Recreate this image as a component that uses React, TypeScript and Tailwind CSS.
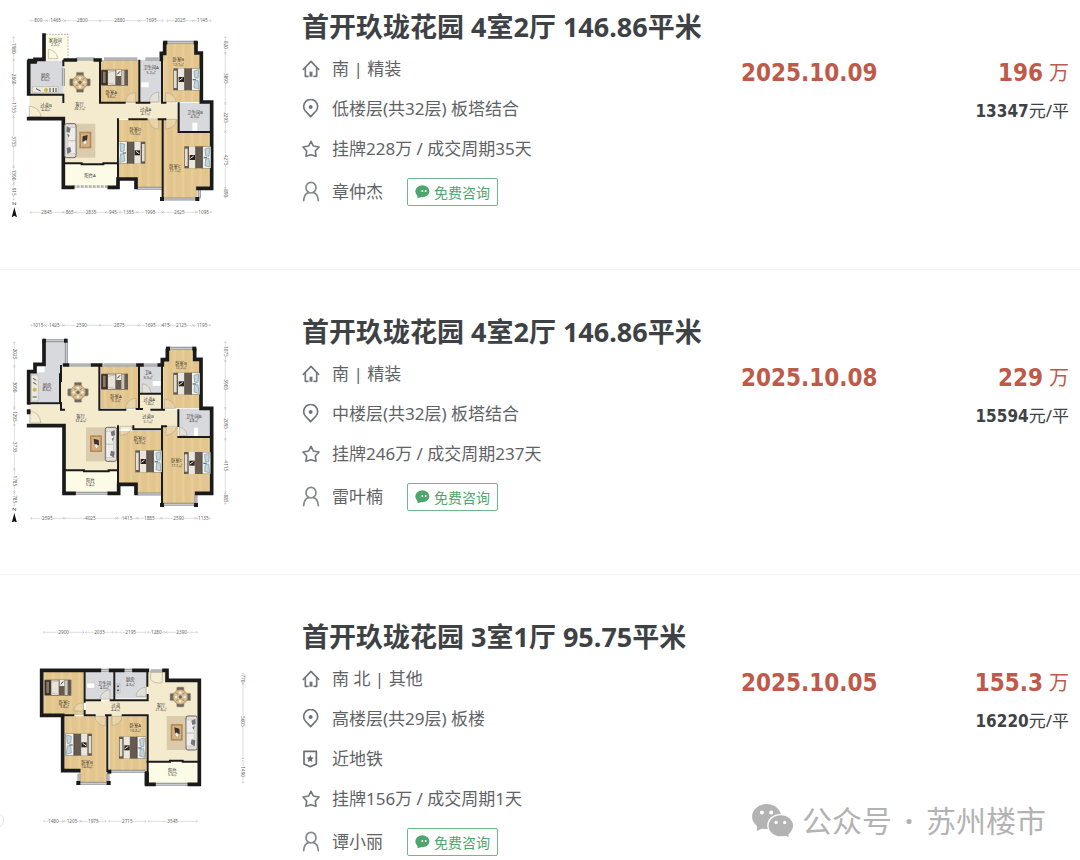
// src/pages/DealListPage.tsx
import type { ReactNode } from 'react';

type Deal = {
  id: string;
  title: string;
  facing: string;
  floor: string;
  subway?: string;
  cycle: string;
  agent: string;
  date: string;
  total: string;
  unit: string;
  plan: ReactNode;
};

const deals: Deal[] = [
  {
    id: 'd1',
    title: '首开玖珑花园 4室2厅 146.86平米',
    facing: '南 | 精装',
    floor: '低楼层(共32层) 板塔结合',
    cycle: '挂牌228万 / 成交周期35天',
    agent: '章仲杰',
    date: '2025.10.09',
    total: '196',
    unit: '13347',
    plan: <PlanWithYard />,
  },
  {
    id: 'd2',
    title: '首开玖珑花园 4室2厅 146.86平米',
    facing: '南 | 精装',
    floor: '中楼层(共32层) 板塔结合',
    cycle: '挂牌246万 / 成交周期237天',
    agent: '雷叶楠',
    date: '2025.10.08',
    total: '229',
    unit: '15594',
    plan: <PlanWithKitchen />,
  },
  {
    id: 'd3',
    title: '首开玖珑花园 3室1厅 95.75平米',
    facing: '南 北 | 其他',
    floor: '高楼层(共29层) 板楼',
    subway: '近地铁',
    cycle: '挂牌156万 / 成交周期1天',
    agent: '谭小丽',
    date: '2025.10.05',
    total: '155.3',
    unit: '16220',
    plan: <PlanSmall />,
  },
];

export default function App() {
  return (
    <main className="relative overflow-hidden bg-white font-['Noto_Sans','Noto_Sans_CJK_SC',sans-serif] text-[#3e4245]">
      {deals.map((deal) => (
        <DealRow key={deal.id} deal={deal} />
      ))}
      <Watermark />
    </main>
  );
}

function DealRow({ deal }: { deal: Deal }) {
  return (
    <article className="grid grid-cols-[302px_1fr_180px_148px] border-b border-[#f4f4f4] pr-[11px] pt-[42px] pb-[59px] first:pt-[7px] last-of-type:border-b-0 last-of-type:pb-0">
      <div className="-mb-10">{deal.plan}</div>
      <div className="whitespace-nowrap">
        <h2 className="text-[27px] leading-10 font-bold">{deal.title}</h2>
        <ul className="mt-0.5 text-[17px] text-[#5f6366]">
          <InfoLine icon={<HouseIcon />}>{deal.facing}</InfoLine>
          <InfoLine icon={<PinIcon />}>{deal.floor}</InfoLine>
          {deal.subway ? <InfoLine icon={<BadgeIcon />}>{deal.subway}</InfoLine> : null}
          <InfoLine icon={<StarIcon />}>{deal.cycle}</InfoLine>
        </ul>
        <div className="mt-[5px] flex h-9 items-center text-[17px] text-[#5f6366]">
          <PersonIcon />
          <span className="ml-3 w-[75px]">{deal.agent}</span>
          <button
            type="button"
            className="flex h-7 items-center gap-1 rounded-xs border border-[#6fb889] px-[7px] text-[14px] text-[#4fa66c]"
          >
            <ChatIcon />
            免费咨询
          </button>
        </div>
      </div>
      <p className="mt-[46px] font-['DejaVu_Sans_Condensed','DejaVu_Sans',sans-serif] text-2xl leading-10 font-bold text-[#be5a49]">
        {deal.date}
      </p>
      <div className="mt-[46px] text-right whitespace-nowrap">
        <p className="flex items-center justify-end gap-1.5 text-[#be5a49]">
          <strong className="font-['DejaVu_Sans_Condensed','DejaVu_Sans',sans-serif] text-2xl leading-10">{deal.total}</strong>
          <span className="text-[20px] leading-10">万</span>
        </p>
        <p className="text-[17px] leading-9">
          <strong className="font-['DejaVu_Sans_Condensed','DejaVu_Sans',sans-serif]">{deal.unit}</strong>元/平
        </p>
      </div>
    </article>
  );
}

function InfoLine({ icon, children }: { icon: ReactNode; children: ReactNode }) {
  return (
    <li className="flex h-10 items-center gap-3">
      {icon}
      <span>{children}</span>
    </li>
  );
}

/* ---------- icons ---------- */

function HouseIcon() {
  return (
    <svg viewBox="0 0 54 54" className="size-[18px] shrink-0" fill="none" stroke="#75787a" strokeWidth="5" strokeLinejoin="round" strokeLinecap="round">
      <path d="M4 28 27 4 50 28" />
      <path d="M10 25V49H18M44 25V49H36" />
      <path d="M27 35V50" strokeWidth="9" strokeLinecap="butt" />
    </svg>
  );
}

function PinIcon() {
  return (
    <svg viewBox="0 0 54 60" className="h-5 w-[18px] shrink-0" fill="none" stroke="#717476" strokeWidth="5" strokeLinejoin="round">
      <path d="M26 53 10 36a21 21 0 1 1 32 0Z" />
      <circle cx="26" cy="24" r="6" fill="#717476" stroke="none" />
    </svg>
  );
}

function StarIcon() {
  return (
    <svg viewBox="0 0 54 54" className="size-[18px] shrink-0" fill="none" stroke="#75787a" strokeWidth="5" strokeLinejoin="round">
      <path d="M27 4 34 18 51 21 40 33 42 49 27 44 12 49 14 33 3 21 20 18Z" />
    </svg>
  );
}

function BadgeIcon() {
  return (
    <svg viewBox="0 0 54 54" className="size-[18px] shrink-0" fill="none" stroke="#6b6e70" strokeWidth="5" strokeLinejoin="round">
      <path d="M6 4H43V42L25 50 6 42Z" />
      <path d="M25 15 28 22 35 23 30 28 31 36 25 32 18 36 19 28 14 23 22 22Z" fill="#6b6e70" stroke="none" />
    </svg>
  );
}

function PersonIcon() {
  return (
    <svg viewBox="0 0 54 66" className="h-[22px] w-[18px] shrink-0" fill="none" stroke="#85888a" strokeWidth="5" strokeLinecap="round">
      <ellipse cx="27" cy="20" rx="15" ry="16" />
      <path d="M5 59C6 45 12 37 20 35M49 59C48 45 42 37 34 35" />
    </svg>
  );
}

function ChatIcon() {
  return (
    <svg viewBox="0 0 45 42" className="h-[14px] w-[15px] shrink-0" fill="#4fa66c">
      <ellipse cx="22" cy="19" rx="21" ry="18" />
      <path d="M6 28 8 40 22 35Z" />
      <circle cx="22" cy="18" r="3" fill="#fff" />
      <circle cx="32" cy="18" r="3" fill="#fff" />
    </svg>
  );
}

function Watermark() {
  return (
    <div className="absolute right-[34px] bottom-4 flex h-12 items-center text-[30px] text-[#b3b3b3]">
      <svg viewBox="0 0 124 100" className="mr-[9px] h-[33px] w-[41px]" fill="#b3b3b3">
        <ellipse cx="44" cy="38" rx="44" ry="38" />
        <path d="M16 60 14 82 36 72Z" />
        <ellipse cx="86" cy="65" rx="40" ry="35" fill="#fff" />
        <ellipse cx="87" cy="66" rx="37" ry="32" />
        <path d="M94 94 111 100 110 82Z" />
        <g fill="#fff">
          <circle cx="30" cy="26" r="6" />
          <circle cx="58" cy="26" r="6" />
          <circle cx="73" cy="56" r="5" />
          <circle cx="99" cy="56" r="5" />
        </g>
      </svg>
      <span>公众号</span>
      <span className="w-[34px] text-center font-bold">·</span>
      <span>苏州楼市</span>
    </div>
  );
}

/* ---------- floor plans, drawn at three units to the pixel ---------- */

const CREAM = '#f4ebcf';
const PALE = '#fcfbe6';
const TILE = '#d8d9dc';
const WALL = '#1a1a1a';

function Plan({ top, label, children }: { top: number; label: string; children: ReactNode }) {
  return (
    <svg viewBox={`0 ${top} 780 630`} role="img" aria-label={label} className="h-[210px] w-[260px]">
      <defs>
        <pattern id="wood" width="26" height="60" patternUnits="userSpaceOnUse">
          <rect width="26" height="60" fill="#e3c68e" />
          <rect width="9" height="60" fill="#e7cc98" />
          <path d="M9 0V60M18 0V60" stroke="#dcbc80" />
        </pattern>
      </defs>
      {children}
    </svg>
  );
}

function Wood({ d }: { d: string }) {
  return <path d={d} fill="url(#wood)" />;
}

function Walls({ d, w = 11 }: { d: string; w?: number }) {
  return <path d={d} fill="none" stroke={WALL} strokeWidth={w} strokeLinecap="square" />;
}

// window strips in the outer walls
function Windows({ d }: { d: string }) {
  return (
    <>
      <path d={d} fill="none" stroke="#8e9295" strokeWidth="9" />
      <path d={d} fill="none" stroke="#d5d8da" strokeWidth="3" />
    </>
  );
}

function Doors({ d }: { d: string }) {
  return <path d={d} fill="#faf3dc" fillOpacity="0.3" stroke="#b3a98f" strokeWidth="2" />;
}

function Bed({ x, y, flip = false }: { x: number; y: number; flip?: boolean }) {
  return (
    <g transform={flip ? `translate(${x + 80} ${y}) scale(-1 1)` : `translate(${x} ${y})`}>
      <rect width="80" height="66" fill="#655a50" />
      <rect x="2" y="7" width="8" height="52" fill="#e3ddd2" />
      <rect x="14" width="20" height="66" fill="#ebe6dd" />
      <rect x="16" y="26" width="16" height="15" fill="#29231f" />
      <path d="M18 36 28 29" stroke="#ece7dd" strokeWidth="3" />
      <rect x="55" y="1" width="24" height="64" fill="#f1f0ec" />
      <path d="M62 8 76 4 74 30 64 28ZM64 38 74 36 77 62 62 58Z" fill="#c5d5dc" stroke="#7a96a3" strokeWidth="2" />
      <path d="M58 34H68" stroke="#5d747d" strokeWidth="4" />
      <path d="M34 0V66M54 0V66" stroke="#453c35" strokeWidth="2" />
    </g>
  );
}

function SmallBed({ x, y }: { x: number; y: number }) {
  return (
    <g transform={`translate(${x} ${y})`}>
      <rect width="80" height="48" fill="#665a4f" />
      <rect y="2" width="18" height="44" fill="#3b312b" />
      <rect x="5" y="6" width="8" height="34" fill="#8a7868" />
      <rect x="20" y="2" width="22" height="44" fill="#e8e3da" />
      <rect x="60" y="2" width="9" height="44" fill="#cdc5b9" />
      <rect x="45" y="1" width="14" height="18" fill="#eeeae3" />
      <path d="M48 14 56 5" stroke="#333" strokeWidth="3" />
      <path d="M20 8 41 4M20 40 41 44" stroke="#b5ab9f" strokeWidth="2" />
    </g>
  );
}

function Sofa({ x, y, flip = false }: { x: number; y: number; flip?: boolean }) {
  return (
    <g transform={flip ? `translate(${x} ${y}) scale(-1 1)` : `translate(${x} ${y})`}>
      <rect x="14" y="0" width="78" height="102" fill="#d9cbac" />
      <rect x="44" y="24" width="36" height="50" fill="#b78b55" />
      <rect x="49" y="29" width="26" height="40" fill="#d4b184" />
      <path d="M54 38 69 34 67 50 53 54Z" fill="#3b322b" />
      <path d="M55 57 62 49 67 56 60 65Z" fill="#f0efe8" stroke="#756a5d" />
      <rect width="34" height="102" rx="6" fill="#e0ddda" stroke="#6a6560" strokeWidth="3" />
      <rect x="10" y="12" width="22" height="38" fill="#efedea" stroke="#aaa5a0" />
      <rect x="10" y="52" width="22" height="38" fill="#efedea" stroke="#aaa5a0" />
      <path d="M6 8 18 14 15 27 5 24ZM6 73 17 70 20 84 8 91ZM7 30 15 34 12 42Z" fill="#73767a" />
    </g>
  );
}

function DiningSet({ x, y }: { x: number; y: number }) {
  return (
    <g transform={`translate(${x} ${y})`}>
      <g fill="#6d665c" stroke="#b5ad9f" strokeWidth="2">
        <rect x="-11" y="-30" width="22" height="14" rx="3" />
        <rect x="-11" y="16" width="22" height="14" rx="3" />
        <rect x="-31" y="-11" width="14" height="22" rx="3" />
        <rect x="17" y="-11" width="14" height="22" rx="3" />
      </g>
      <circle r="22" fill="#dcbd88" stroke="#a98a58" strokeWidth="2" />
      <circle r="5" fill="#7a6c45" />
      <g fill="#ece9df" stroke="#aaa" strokeWidth="1">
        <circle cy="-13" r="5" />
        <circle cy="13" r="5" />
        <circle cx="-13" r="5" />
        <circle cx="13" r="5" />
      </g>
      <path d="M-13-13-7-7M13-13 7-7M-13 13-7 7M13 13 7 7" stroke="#a5834f" strokeWidth="3" />
    </g>
  );
}

function Room({ x, y, name, area }: { x: number; y: number; name: string; area?: string }) {
  return (
    <text x={x} y={y} textAnchor="middle" fontSize="13" fill="#3c3833" className="font-['Noto_Sans','Noto_Sans_CJK_SC',sans-serif]">
      {name}
      {area ? (
        <tspan x={x} dy="13" fontSize="11">
          {area}
        </tspan>
      ) : null}
    </text>
  );
}

type Span = [from: number, to: number, size: string];

// dimension chain: a row of measured spans, or a column when vertical
function Dims({ at, spans, vertical = false }: { at: number; spans: Span[]; vertical?: boolean }) {
  return (
    <g transform={vertical ? `translate(${at} 0) rotate(90)` : `translate(0 ${at})`}>
      {spans.map(([from, to, size]) => {
        const mid = (from + to) / 2;
        const half = size.length * 4;
        return (
          <g key={from}>
            <path
              d={`M${from} 0H${Math.max(from, mid - half)}M${Math.min(to, mid + half)} 0H${to}M${from + 4}-4 ${from} 0 ${from + 4} 4M${to - 4}-4 ${to} 0 ${to - 4} 4`}
              fill="none"
              stroke="#9b9b9b"
            />
            <text x={mid} y="5" textAnchor="middle" fontSize="14" fill="#666" className="font-['Noto_Sans',sans-serif]">
              {size}
            </text>
          </g>
        );
      })}
    </g>
  );
}

function Compass({ y }: { y: number }) {
  return (
    <g transform={`translate(43 ${y})`}>
      <circle r="15" fill="#fff" stroke="#dedede" />
      <path d="M0-15 8 15 0 10-8 15Z" fill="#111" />
      <path d="M-4-22V-30L4-22V-30" fill="none" stroke="#555" strokeWidth="2" />
    </g>
  );
}

function PlanWithYard() {
  return (
    <Plan top={21} label="户型图">
      <path d="M190 180H300V310H535V358H355V490H190V358H88V285H190Z" fill={CREAM} />
      <path d="M134 103H204V180H134ZM190 492H355V562H190Z" fill={PALE} />
      <path d="M88 182H190V282H88ZM420 180H486V308H420ZM537 308H633V395H537Z" fill={TILE} />
      <Wood d="M302 180H417V308H302ZM490 130H586V160H604V306H490ZM356 360H487V562H410V535H356ZM489 358H536V397H633V565H592V597H485V565H489Z" />
      <path d="M138 103H204V178" fill="none" stroke="#8b8b8b" strokeWidth="2" strokeDasharray="5 4" />
      <Doors d="M145 176V148Q170 152 174 176ZM88 350V318Q118 322 124 350ZM376 306Q378 278 407 278V306ZM448 306Q450 278 476 276V306ZM497 306V278Q524 280 528 306ZM445 358Q450 386 476 388V358ZM497 358V388Q526 384 530 358Z" />
      <Windows d="M228 177H284M312 177H412M436 177H476M500 127H582M410 565H488M488 597H592M190 205V258M598 570V595" />
      <path d="M218 560H326" stroke="#b5b5b5" strokeWidth="8" strokeDasharray="9 3" />
      <Walls d="M132 105V178H105V186H86V282M86 356H190V562H218M328 562H354V537H408V562M88 182H106M196 180H226M286 180H300M484 178V160H494V130M588 130V159H604V306H635V565H594" />
      <Walls w={6} d="M92 284H190V306M190 182V196M300 180V308H374M410 308H448M418 182V306M486 170V308H496M190 490H245M245 493H310M310 490H354V358M388 358H440M476 358H496M488 358V592M536 310V396H633M354 490V535M92 284H96" />
      <g fill={WALL}>
        <rect x="490" y="122" width="12" height="12" />
        <rect x="581" y="122" width="12" height="12" />
        <rect x="480" y="591" width="12" height="12" />
        <rect x="586" y="591" width="12" height="12" />
      </g>
      <path d="M97 260H175V278H97Z" fill="#ece9e0" stroke="#8b8880" />
      <path d="M108 266 122 273M150 264V276M160 264V276M168 264V276" stroke="#4b4b4b" strokeWidth="3" />
      <circle cx="138" cy="270" r="6" fill="#ccb84f" />
      <path d="M424 247H446V262H424ZM577 368H592V392H577Z" fill="#fff" />
      <DiningSet x={240} y={247} />
      <Sofa x={194} y={371} />
      <SmallBed x={304} y={209} />
      <Bed x={520} y={205} />
      <Bed x={356} y={425} flip />
      <Bed x={553} y={439} />
      <Room x={166} y={126} name="家政间" area="2.2㎡" />
      <Room x={136} y={230} name="厨房" area="6.0㎡" />
      <Room x={138} y={320} name="过道B" area="4.4㎡" />
      <Room x={239} y={318} name="客厅" area="26.7㎡" />
      <Room x={334} y={281} name="卧室A" area="9.6㎡" />
      <Room x={453} y={208} name="卫生间A" area="5.2㎡" />
      <Room x={535} y={184} name="卧室B" area="12.1㎡" />
      <Room x={437} y={333} name="过道A" area="4.7㎡" />
      <Room x={585} y={341} name="卫生间B" area="4.9㎡" />
      <Room x={406} y={392} name="卧室D" area="15.0㎡" />
      <Room x={525} y={504} name="卧室C" area="17.1㎡" />
      <Room x={270} y={530} name="阳台A" />
      <Dims at={62} spans={[[90, 140, '800'], [140, 194, '1465'], [194, 300, '2800'], [300, 418, '2880'], [418, 490, '1695'], [500, 580, '2025'], [580, 634, '1145']]} />
      <Dims at={637} spans={[[90, 190, '2845'], [190, 228, '865'], [228, 318, '2835'], [318, 360, '945'], [360, 412, '1355'], [412, 488, '1995'], [488, 588, '2625'], [588, 634, '1095']]} />
      <Dims vertical at={41} spans={[[110, 180, '1980'], [180, 295, '2860'], [295, 350, '1755'], [350, 500, '3755'], [500, 550, '1390'], [550, 600, '915']]} />
      <Dims vertical at={676} spans={[[110, 160, '820'], [160, 310, '3895'], [310, 395, '2295'], [395, 565, '4275'], [565, 594, '890']]} />
      <Compass y={637} />
    </Plan>
  );
}

function PlanWithKitchen() {
  return (
    <Plan top={3} label="户型图">
      <path d="M183 165H298V296H420V250H486V296H535V345H487V355H355V478H193V344H88V282H183Z" fill={CREAM} />
      <path d="M193 480H355V548H193Z" fill={PALE} />
      <path d="M134 88H198V165H182V277H92V184H134ZM419 165H486V246H419ZM537 294H633V378H537Z" fill={TILE} />
      <Wood d="M302 165H415V292H302ZM500 115H583V145H604V292H490V145H500ZM356 360H485V548H410V518H356ZM489 348H534V381H633V548H588V580H485V548H489Z" />
      <Doors d="M90 336V300Q120 304 122 336ZM376 292Q380 264 408 262V292ZM427 248V218Q450 222 454 248ZM494 292V264Q522 268 526 292ZM360 346V374Q392 370 396 346ZM498 346V374Q526 368 530 346ZM538 374V348Q558 352 562 374Z" />
      <Windows d="M138 89H196M199 92V160M205 162H275M310 162H410M432 162H474M506 112H580M224 547H328M412 549H484M488 580H586M588 552V578" />
      <Walls d="M132 92V160H105V182H86V276M86 300V304M86 344H192V547H222M328 547H356V520H408V547M194 162H202M278 162H302M414 162H426M478 162H487V146H502V118M584 118V145H603V292H635V547H590" />
      <Walls w={6} d="M92 277H180V190M183 165V210M183 276V296H192M298 165V296H376M417 165V292M410 294H426M454 296H492M486 150V294M420 248H486M192 478H252M252 481H326M326 478H354V346M400 346V355H486M486 346V578M486 346H498M535 298V345M535 378H633M354 480V518" />
      <g fill={WALL}>
        <rect x="127" y="83" width="11" height="12" />
        <rect x="192" y="83" width="11" height="12" />
        <rect x="498" y="107" width="12" height="12" />
        <rect x="577" y="107" width="12" height="12" />
        <rect x="480" y="576" width="12" height="12" />
        <rect x="582" y="576" width="12" height="12" />
      </g>
      <path d="M94 192H115V270H94Z" fill="#ece9e0" stroke="#8b8880" />
      <path d="M99 202 109 208M99 214 109 220M98 258H110" stroke="#55524c" strokeWidth="3" />
      <circle cx="104" cy="236" r="6" fill="#ccb84f" />
      <path d="M458 210H482V224H458ZM582 350H594V374H582Z" fill="#fff" />
      <DiningSet x={234} y={244} />
      <Sofa x={350} y={349} flip />
      <SmallBed x={304} y={188} />
      <Bed x={520} y={185} />
      <Bed x={406} y={418} />
      <Bed x={552} y={423} />
      <Room x={141} y={227} name="厨房" area="8.6㎡" />
      <Room x={242} y={320} name="客厅" area="32.4㎡" />
      <Room x={348} y={260} name="卧室A" area="9.2㎡" />
      <Room x={444} y={190} name="卫A" area="3.0㎡" />
      <Room x={448} y={270} name="过道A" area="1.8㎡" />
      <Room x={543} y={161} name="卧室B" area="12.2㎡" />
      <Room x={444} y={322} name="过道B" area="5.1㎡" />
      <Room x={581} y={321} name="卫生间B" area="4.8㎡" />
      <Room x={419} y={387} name="卧室D" area="14.9㎡" />
      <Room x={530} y={454} name="卧室C" area="17.1㎡" />
      <Room x={271} y={512} name="阳台" area="5.4㎡" />
      <Dims at={43} spans={[[92, 136, '1015'], [136, 190, '1425'], [190, 300, '2590'], [300, 416, '2875'], [416, 486, '1695'], [486, 508, '415'], [508, 580, '2125'], [580, 632, '1195']]} />
      <Dims at={622} spans={[[92, 192, '2595'], [192, 350, '4025'], [350, 412, '1415'], [412, 484, '1885'], [484, 588, '2590'], [588, 632, '1135']]} />
      <Dims vertical at={43} spans={[[92, 166, '2025'], [166, 290, '3090'], [290, 342, '1295'], [342, 475, '3735'], [475, 544, '1785'], [544, 585, '785']]} />
      <Dims vertical at={676} spans={[[92, 150, '1075'], [150, 292, '3905'], [292, 384, '2095'], [384, 545, '4115'], [545, 580, '885']]} />
      <Compass y={621} />
    </Plan>
  );
}

function PlanSmall() {
  return (
    <Plan top={18} label="户型图">
      <path d="M443 180H502V212H594V452H443V315H258V270H443Z" fill={CREAM} />
      <path d="M446 454H594V518H446Z" fill={PALE} />
      <path d="M258 182H340V264H258ZM347 182H440V262H347Z" fill={TILE} />
      <Wood d="M130 182H252V312H130ZM194 316H320V478H324V515H238V478H194ZM328 316H440V480H328Z" />
      <Doors d="M221 300Q222 276 250 276V300ZM300 264Q303 240 330 236V264ZM408 256Q410 232 438 228V256ZM452 178V206Q462 218 486 216L488 178ZM284 316Q290 344 316 344V316ZM336 316V344Q364 340 366 316Z" />
      <Windows d="M300 178H330M370 178H400M452 180H488M330 481H436M240 517H322M466 520H564M237 488V512M324 488V512" />
      <Walls d="M125 178V313H188V479H236M125 178H298M332 178H368M402 178H442M492 178H501V208H598V520H568M462 520H440V486" />
      <Walls w={6} d="M254 182V272M254 300V313H284M220 313H190M256 268H300M332 268H443V252M343 182V266M442 182V224M322 313V480M318 313H332M368 313H443V452M442 452H510M510 449H548M548 452H594M443 452V516M324 480H330" />
      <g fill={WALL}>
        <rect x="229" y="510" width="12" height="12" />
        <rect x="320" y="510" width="12" height="12" />
        <rect x="434" y="484" width="12" height="40" />
        <rect x="322" y="476" width="12" height="12" />
      </g>
      <path d="M260 216H284V232H260Z" fill="#fff" stroke="#aaa" />
      <path d="M348 218H360V246H348Z" fill="#dcdcdc" stroke="#8d8d8d" />
      <circle cx="354" cy="226" r="3" fill="#555" />
      <circle cx="354" cy="238" r="3" fill="#555" />
      <DiningSet x={541} y={258} />
      <Sofa x={592} y={315} flip />
      <SmallBed x={134} y={206} />
      <Bed x={196} y={368} flip />
      <Bed x={357} y={377} />
      <Room x={193} y={279} name="卧室C" area="9.8㎡" />
      <Room x={313} y={221} name="卫生间" area="4.0㎡" />
      <Room x={391} y={211} name="厨房" area="4.3㎡" />
      <Room x={347} y={287} name="过道" area="4.4㎡" />
      <Room x={483} y={288} name="客厅" area="21.6㎡" />
      <Room x={261} y={458} name="卧室B" area="14.6㎡" />
      <Room x={406} y={349} name="卧室A" area="10.2㎡" />
      <Room x={517} y={483} name="阳台" area="5.3㎡" />
      <Dims at={64} spans={[[130, 252, '2900'], [256, 341, '2035'], [346, 438, '2195'], [442, 496, '1280'], [498, 592, '2390']]} />
      <Dims at={631} spans={[[130, 190, '1480'], [190, 242, '1205'], [242, 318, '1975'], [326, 438, '2715'], [444, 592, '3545']]} />
      <Dims vertical at={729} spans={[[186, 218, '770'], [218, 444, '5605'], [448, 516, '1490']]} />
      <circle cx="-10" cy="628" r="21" fill="#fff" stroke="#d8d8d8" strokeWidth="2" />
    </Plan>
  );
}
